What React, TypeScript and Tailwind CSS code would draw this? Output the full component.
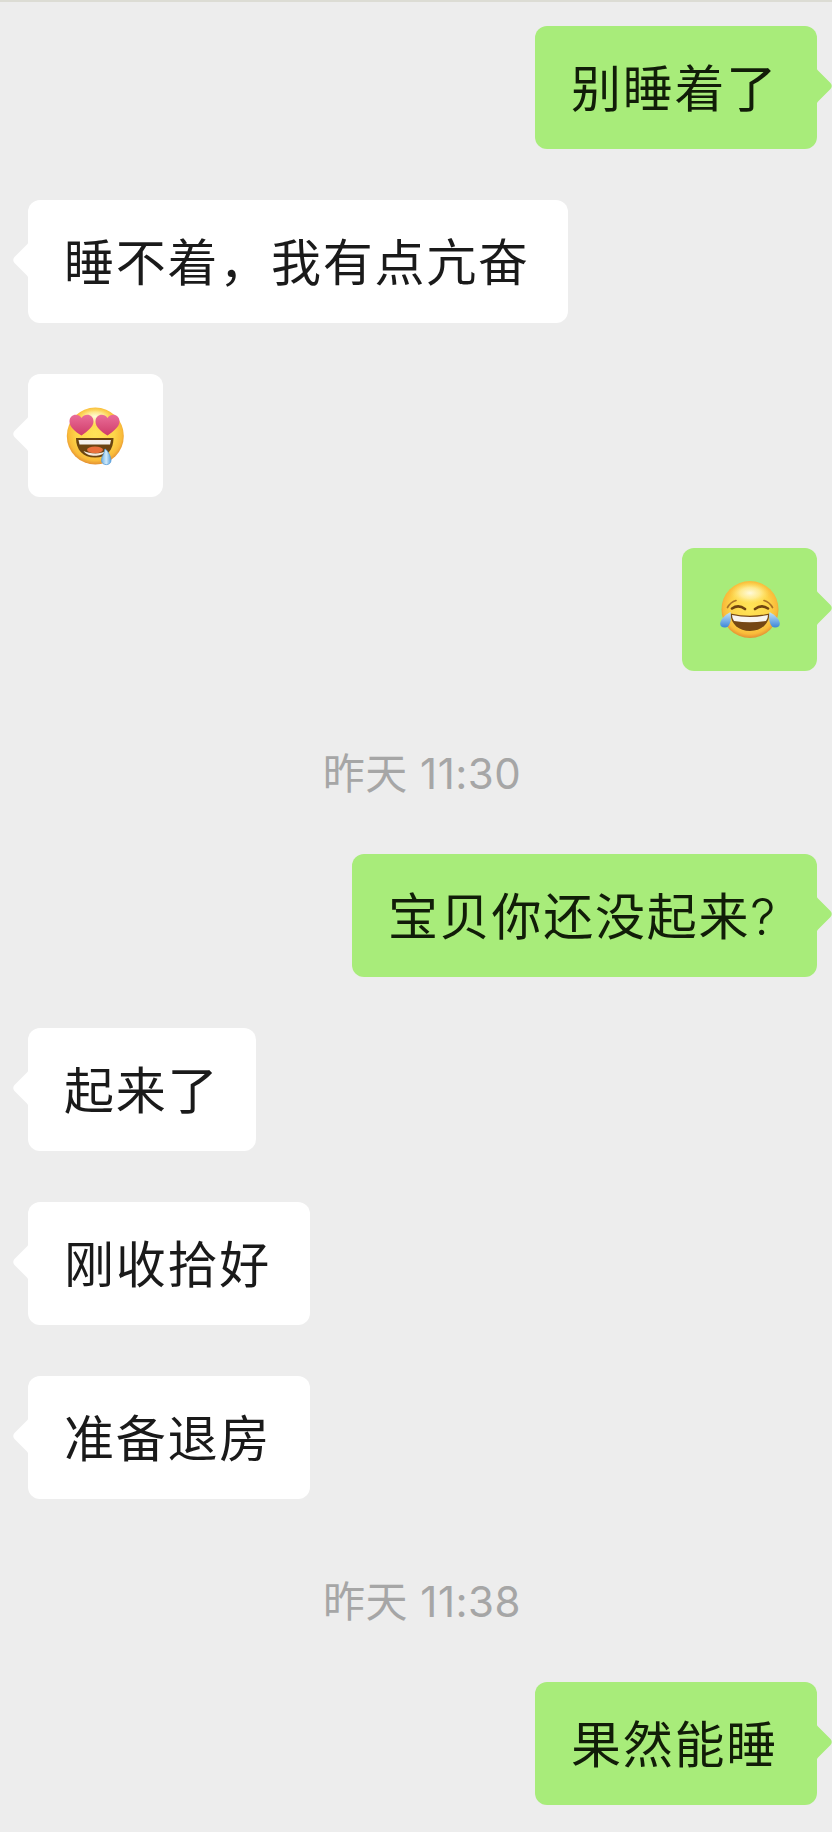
import React from 'react';

type Message = {
  id: number;
  type: 'sent' | 'received' | 'time';
  text?: string;
  suffix?: string;
  emoji?: 'drool' | 'joy';
  width?: string;
};

const messages: Message[] = [
  { id: 1, type: 'sent', text: '别睡着了', width: 'w-[282px]' },
  { id: 2, type: 'received', text: '睡不着，我有点亢奋', width: 'w-[540px]' },
  { id: 3, type: 'received', emoji: 'drool', width: 'w-[135px]' },
  { id: 4, type: 'sent', emoji: 'joy', width: 'w-[135px]' },
  { id: 5, type: 'time', text: '昨天 11:30' },
  { id: 6, type: 'sent', text: '宝贝你还没起来', suffix: '?', width: 'w-[465px]' },
  { id: 7, type: 'received', text: '起来了', width: 'w-[228px]' },
  { id: 8, type: 'received', text: '刚收拾好', width: 'w-[282px]' },
  { id: 9, type: 'received', text: '准备退房', width: 'w-[282px]' },
  { id: 10, type: 'time', text: '昨天 11:38' },
  { id: 11, type: 'sent', text: '果然能睡', width: 'w-[282px]' },
];

const FaceGradient = ({ id }: { id: string }) => (
  <>
    <radialGradient id={id} cx="0.5" cy="0.46" r="0.56">
      <stop offset="0" stopColor="#ffe458" />
      <stop offset="0.6" stopColor="#fdd549" />
      <stop offset="0.84" stopColor="#f9bb3a" />
      <stop offset="1" stopColor="#de8430" />
    </radialGradient>
    <radialGradient id={`${id}-shine`}>
      <stop offset="0" stopColor="#fffce4" stopOpacity="0.95" />
      <stop offset="0.5" stopColor="#fff6b8" stopOpacity="0.65" />
      <stop offset="1" stopColor="#ffe96e" stopOpacity="0" />
    </radialGradient>
    <linearGradient id={`${id}-tear`} x1="0" y1="0" x2="0" y2="1">
      <stop offset="0" stopColor="#c4e6fa" />
      <stop offset="1" stopColor="#3c86d8" />
    </linearGradient>
  </>
);

const DroolEmoji = () => (
  <svg width="60" height="62" viewBox="0 0 60 62">
    <defs>
      <FaceGradient id="drool" />
      <linearGradient id="heart" x1="0" y1="0" x2="0" y2="1">
        <stop offset="0" stopColor="#ea6d98" />
        <stop offset="1" stopColor="#cf3c69" />
      </linearGradient>
      <linearGradient id="drip" x1="0" y1="0" x2="1" y2="0">
        <stop offset="0" stopColor="#6fb0e4" />
        <stop offset="0.5" stopColor="#cfeafb" />
        <stop offset="1" stopColor="#5c9fda" />
      </linearGradient>
    </defs>
    <circle cx="30.3" cy="31" r="28.5" fill="url(#drool)" />
    <ellipse cx="30" cy="11.5" rx="18" ry="9" fill="url(#drool-shine)" />
    <path d="M16.500 30.500 C10 26.500 4.500 22 4.500 16.500 C4.500 9 13 7.500 16.500 13 C20 7.500 28.500 9 28.500 16.500 C28.500 22 22 26.500 16.500 30.500 Z" fill="url(#heart)" />
    <path d="M42.500 30.500 C36 26.500 30.500 22 30.500 16.500 C30.500 9 39 7.500 42.500 13 C46 7.500 54.500 9 54.500 16.500 C54.500 22 48 26.500 42.500 30.500 Z" fill="url(#heart)" />
    <path d="M11 33 H48.500 C48.500 45 42 52.500 30 52.500 C18 52.500 11 45 11 33 Z" fill="#6b4410" />
    <path d="M13.500 35 H46 L45 39.500 H14.500 Z" fill="#f4f1ec" />
    <ellipse cx="30" cy="44.800" rx="8" ry="3.400" fill="#e9703b" />
    <path d="M18.500 46 C25 49.300 36 49.300 41 46 C38 49.800 34 50.800 30 50.800 C25 50.800 21 49.500 18.500 46 Z" fill="#f6e9dc" />
    <path d="M40 44 C42.500 45 46 51.500 46 55.500 C46 61 36.500 61 36.500 55.500 C36.500 51.500 39 49.500 40 44 Z" fill="url(#drip)" stroke="#5b9fda" strokeWidth="0.8" />
  </svg>
);

const JoyEmoji = () => (
  <svg width="62" height="60" viewBox="0 0 62 60">
    <defs>
      <FaceGradient id="joy" />
    </defs>
    <circle cx="31" cy="29.500" r="28.500" fill="url(#joy)" />
    <ellipse cx="31" cy="13" rx="20" ry="11" fill="url(#joy-shine)" />
    <path d="M8.500 27.500 Q11.500 22 17 20.500 M53.500 27.500 Q50.500 22 45 20.500" fill="none" stroke="#a97325" strokeWidth="1.700" strokeLinecap="round" />
    <path d="M13 28.500 Q19.500 24 26 29 M36 29 Q42.500 24 49 28.500" fill="none" stroke="#704510" strokeWidth="2.600" strokeLinecap="round" />
    <path d="M11.500 33.500 Q31 38 50.500 33.500 C50 44.500 42 51 31 51 C20 51 12 44.500 11.500 33.500 Z" fill="#754713" />
    <path d="M13 35 Q31 39 49 35 Q49 38.500 47 41 Q31 43.500 15 41 Q13 38.500 13 35 Z" fill="#f8f5f0" />
    <path d="M11.500 32 C12.500 39 11.500 47.500 6 47.500 C-2 47.500 0 38 11.500 32 Z" fill="url(#joy-tear)" />
    <path d="M50.500 32 C49.500 39 50.500 47.500 56 47.500 C64 47.500 62 38 50.500 32 Z" fill="url(#joy-tear)" />
  </svg>
);

const Tail = ({ sent }: { sent: boolean }) => (
  <svg
    className={`absolute top-[40px] ${sent ? '-right-[15px] text-[#a8ec7a] -scale-x-100' : '-left-[15px] text-white'}`}
    width="16"
    height="40"
    viewBox="0 0 16 40"
    fill="currentColor"
  >
    <path d="M16 1 Q15 4 12.500 6 L1.500 17 Q-1 20 1.500 23 L12.500 34 Q15 36 16 39 Z" />
  </svg>
);

export default function App() {
  return (
    <div className='h-[1832px] w-[832px] overflow-hidden border-t-2 border-[#dcdcd4] bg-[#ededed] pt-6 font-["Inter","Noto_Sans_CJK_SC",sans-serif]'>
      <div className="flex flex-col gap-[51px]">
        {messages.map((msg) => {
          if (msg.type === 'time') {
            return (
              <div key={msg.id} className="flex h-[81px] items-center justify-center pt-[22px] text-[42px] leading-none tracking-[0.5px] text-[#a6a6a6]">
                <span className="pl-[12px]">{msg.text}</span>
              </div>
            );
          }

          const sent = msg.type === 'sent';
          return (
            <div key={msg.id} className={`flex pr-[15px] pl-[28px] ${sent ? 'justify-end' : 'justify-start'}`}>
              <div
                className={`relative flex h-[123px] items-center rounded-xl ${msg.width} ${
                  sent ? 'bg-[#a8ec7a] text-[#111d08]' : 'bg-white text-[#1a1a1a]'
                }`}
              >
                <Tail sent={sent} />
                {msg.text && (
                  <span className="pt-0.5 pl-[36px] text-[50px] leading-none tracking-[1.75px] whitespace-nowrap">
                    {msg.text}
                    {msg.suffix && <span className="font-[360]">{msg.suffix}</span>}
                  </span>
                )}
                {msg.emoji === 'drool' && <div className="pl-[37px]"><DroolEmoji /></div>}
                {msg.emoji === 'joy' && <div className="pl-[37px]"><JoyEmoji /></div>}
              </div>
            </div>
          );
        })}
      </div>
    </div>
  );
}
